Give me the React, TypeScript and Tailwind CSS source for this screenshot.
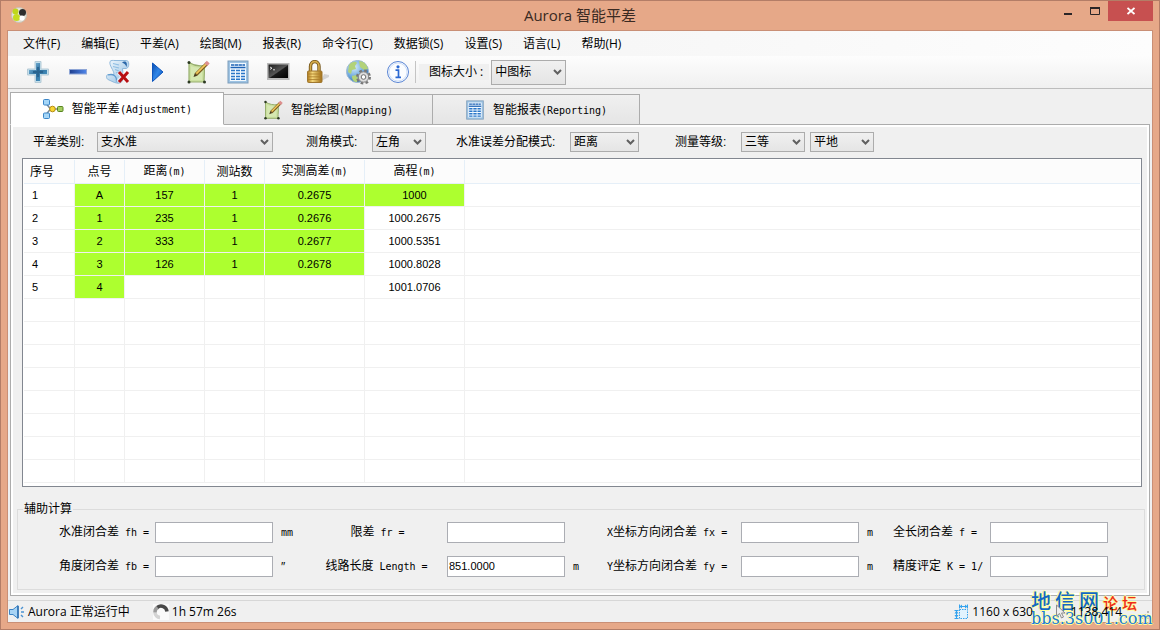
import { useState } from "react";
import type { ReactNode } from "react";

const MENUS = [
  "文件(F)",
  "编辑(E)",
  "平差(A)",
  "绘图(M)",
  "报表(R)",
  "命令行(C)",
  "数据锁(S)",
  "设置(S)",
  "语言(L)",
  "帮助(H)",
];

type Cell = { value: string; green?: boolean };

const g = (value: string): Cell => ({ value, green: true });
const w = (value: string): Cell => ({ value });

const ROWS: Cell[][] = [
  [g("A"), g("157"), g("1"), g("0.2675"), g("1000")],
  [g("1"), g("235"), g("1"), g("0.2676"), w("1000.2675")],
  [g("2"), g("333"), g("1"), g("0.2677"), w("1000.5351")],
  [g("3"), g("126"), g("1"), g("0.2678"), w("1000.8028")],
  [g("4"), w(""), w(""), w(""), w("1001.0706")],
];

const HEADERS = ["点号", "距离(m)", "测站数", "实测高差(m)", "高程(m)"];
const EMPTY_ROWS = 8;

// Latin runs are half as wide as the Chinese characters beside them
function Mixed({ text }: { text: string }) {
  const parts = text.split(/([\x20-\x7e]+)/).filter(Boolean);
  return (
    <>
      {parts.map((p, i) =>
        /^[\x20-\x7e]+$/.test(p) ? (
          <span
            key={i}
            className="font-['DejaVu_Sans_Mono','Liberation_Mono',monospace] text-[10px] whitespace-pre"
          >
            {p}
          </span>
        ) : (
          <span key={i}>{p}</span>
        ),
      )}
    </>
  );
}

/* ---------- icons ---------- */

function PlusIcon() {
  return (
    <svg width="24" height="24" viewBox="0 0 24 24">
      <defs>
        <linearGradient id="plus" x1="0" y1="0" x2="1" y2="1">
          <stop offset="0" stopColor="#8cc8e8" />
          <stop offset="0.5" stopColor="#2f6f9f" />
          <stop offset="1" stopColor="#4f9fcc" />
        </linearGradient>
      </defs>
      <path
        d="M9 1.500h6V9h7.500v6H15v7.500H9V15H1.500V9H9z"
        fill="#c3dfec"
        stroke="#b4cad6"
      />
      <path d="M10 3h4v7h7v4h-7v7h-4v-7H3v-4h7z" fill="url(#plus)" />
      <path d="M12 7v10M7 12h10" stroke="#2a648f" strokeWidth="1.800" />
    </svg>
  );
}

function MinusIcon() {
  return (
    <svg width="24" height="24" viewBox="0 0 24 24">
      <defs>
        <linearGradient id="minus" x1="0" y1="0" x2="1" y2="0">
          <stop offset="0" stopColor="#1f3f8f" />
          <stop offset="1" stopColor="#4f86ea" />
        </linearGradient>
      </defs>
      <rect x="3.500" y="9.500" width="17" height="4.500" fill="url(#minus)" stroke="#8fa6d6" />
    </svg>
  );
}

function ScrollDeleteIcon() {
  return (
    <svg width="26" height="26" viewBox="0 0 26 26">
      <defs>
        <linearGradient id="scroll" x1="0" y1="0" x2="1" y2="1">
          <stop offset="0" stopColor="#f4fafe" />
          <stop offset="1" stopColor="#8dbbe0" />
        </linearGradient>
      </defs>
      <path
        d="M5 2.500c1-1.500 3-1 5-1h11.500c3 0 3 7 0 8h-4c0 4 2 9-1 13.500-2 2-5 1-7 .500L3 20.500c-2-1-2-4.500 0-5h6C9 11 4 7 5 2.500z"
        fill="url(#scroll)"
        stroke="#8fb9dc"
      />
      <path d="M17 3.500c3-2.500 6-.500 4.500 4.500-1-3-2.500-3.500-4.500-4.500z" fill="#2b67a8" />
      <path d="M3 16c5-1.500 9 .500 8.500 6.500" fill="none" stroke="#5f9bd0" strokeWidth="1.300" />
      <path d="M8 4.500l6 1.500M8 7.500l6 1.500M10 10.500l4 1.500M11 13.500l3 1" stroke="#8ebde2" strokeWidth="1.200" />
      <path d="M13.500 13l9 9.500M22.500 12.500L13 23" stroke="#fff" strokeWidth="4.500" opacity="0.6" />
      <path d="M14 13l9 10M23 13l-9 10" stroke="#b80f12" strokeWidth="3" />
    </svg>
  );
}

function PlayIcon() {
  return (
    <svg width="24" height="24" viewBox="0 0 24 24">
      <defs>
        <linearGradient id="play" x1="0" y1="0" x2="1" y2="1">
          <stop offset="0" stopColor="#0a4cae" />
          <stop offset="0.5" stopColor="#2f86e8" />
          <stop offset="1" stopColor="#0a4cae" />
        </linearGradient>
      </defs>
      <path d="M6.500 3L17 12 6.500 21.500z" fill="url(#play)" stroke="#0d55bd" />
    </svg>
  );
}

function MapIcon({ size = 24 }: { size?: number }) {
  return (
    <svg width={size} height={size} viewBox="0 0 24 24">
      <path
        d="M3 2.500c4 2.500 10 4 15 3 1 5 0 10 0 16.500H3z"
        fill="#cbe0a0"
        stroke="#97ae6e"
        strokeWidth="1.200"
      />
      <path d="M5 6c3 1.500 7 2 11 1.500V20H5z" fill="#d6e8b2" />
      <circle cx="3" cy="2.500" r="1.500" fill="#2c3922" />
      <circle cx="3" cy="22" r="1.500" fill="#2c3922" />
      <circle cx="18.500" cy="22" r="1.500" fill="#2c3922" />
      <path d="M10 14.500L21 3.500" stroke="#7a5a1e" strokeWidth="3.600" />
      <path d="M10.300 13.700L20.700 3.300" stroke="#f2c95c" strokeWidth="1.800" />
      <path d="M19.800 4.700L22.300 2.200" stroke="#dd8f8f" strokeWidth="4" />
      <path d="M7.500 17l1.300-3.700 2.500 2.400z" fill="#4a3a1e" />
    </svg>
  );
}

function SheetIcon({ size = 24 }: { size?: number }) {
  return (
    <svg width={size} height={size} viewBox="0 0 24 24">
      <rect x="1.500" y="0.500" width="21" height="23" fill="#7c9dbb" />
      <rect x="2.500" y="1.500" width="19" height="21" fill="#9dc3e3" />
      <rect x="4" y="3" width="16" height="18" fill="#f2f9ff" />
      <path d="M5 5h14" stroke="#1c62b5" strokeWidth="1.500" strokeDasharray="3.300 0.500" />
      <path d="M4.500 7.500h15" stroke="#1c62b5" strokeWidth="1.500" />
      <path
        d="M5 10.500h14M5 13.500h14M5 16.500h14M5 19.300h14"
        stroke="#2a76c8"
        strokeWidth="1.600"
        strokeDasharray="4 1"
      />
    </svg>
  );
}

function ConsoleIcon() {
  return (
    <svg width="24" height="24" viewBox="0 0 24 24">
      <defs>
        <linearGradient id="console" x1="0" y1="0" x2="1" y2="1">
          <stop offset="0" stopColor="#1c1c1c" />
          <stop offset="0.5" stopColor="#555" />
          <stop offset="0.550" stopColor="#1a1a1a" />
          <stop offset="1" stopColor="#000" />
        </linearGradient>
      </defs>
      <rect x="1" y="3" width="22.500" height="17" fill="#b9b9b9" />
      <rect x="2.500" y="4.500" width="19.500" height="13.500" fill="url(#console)" />
      <path d="M4 7l2 1.200L4 9.400M7 9.800h2" fill="none" stroke="#eee" strokeWidth="0.900" />
    </svg>
  );
}

function LockIcon() {
  return (
    <svg width="24" height="24" viewBox="0 0 24 24">
      <defs>
        <linearGradient id="lock" x1="0" y1="0" x2="1" y2="0">
          <stop offset="0" stopColor="#b07a1c" />
          <stop offset="0.350" stopColor="#f4d77c" />
          <stop offset="1" stopColor="#a06c14" />
        </linearGradient>
      </defs>
      <path d="M15 21l8-4v-2l-5-1z" fill="#c4c4c4" opacity="0.700" />
      <path d="M4.500 12V6.500c0-6.500 8.500-6.500 8.500 0V12" fill="none" stroke="#77571a" strokeWidth="3.400" />
      <path d="M4.500 12V6.500c0-6.500 8.500-6.500 8.500 0V12" fill="none" stroke="#d6ac4c" strokeWidth="1.600" />
      <rect x="1.500" y="11" width="14.500" height="11.500" rx="1" fill="url(#lock)" stroke="#a07830" />
      <path d="M2 14h13.500M2 16.800h13.500M2 19.500h13.500" stroke="#a97c2a" strokeWidth="0.800" />
    </svg>
  );
}

function GlobeGearIcon() {
  return (
    <svg width="26" height="26" viewBox="0 0 26 26">
      <defs>
        <radialGradient id="globe" cx="0.350" cy="0.300" r="0.800">
          <stop offset="0" stopColor="#d6ecfb" />
          <stop offset="0.550" stopColor="#6fa9de" />
          <stop offset="1" stopColor="#2c66a8" />
        </radialGradient>
      </defs>
      <circle cx="12.500" cy="12.500" r="11" fill="url(#globe)" stroke="#9dbad4" />
      <path
        d="M4 6c3-4 7-4 8-2l-2 3 1 3-4 1-1 4-3-2zM14 2c5 0 8 4 9 8l-4 1-4-3zM7 17l4-1 2 3-1 4c-3 0-5-2-5-6z"
        fill="#b2d279"
      />
      <circle cx="18.500" cy="18" r="6" fill="none" stroke="#777" strokeWidth="3" strokeDasharray="2.500 2.200" />
      <circle cx="18.500" cy="18" r="5.200" fill="#dcdcdc" stroke="#858585" />
      <circle cx="18.500" cy="18" r="2.300" fill="#fff" stroke="#6d6d6d" />
    </svg>
  );
}

function InfoIcon() {
  return (
    <svg width="24" height="24" viewBox="0 0 24 24">
      <circle cx="12" cy="12" r="10.500" fill="#fbfdff" stroke="#5884d4" />
      <circle cx="12" cy="12" r="9" fill="none" stroke="#cfdff8" />
      <circle cx="12" cy="6.800" r="1.600" fill="#2b68d2" />
      <path d="M9.500 10.200h3v7M9.500 17.300h5.500" fill="none" stroke="#2b68d2" strokeWidth="1.700" />
    </svg>
  );
}

function NetworkIcon() {
  return (
    <svg width="22" height="22" viewBox="0 0 22 22">
      <path d="M4.500 6l4 5-4 5M10 11h8" fill="none" stroke="#7b8794" strokeWidth="1.500" />
      <rect x="1.500" y="1.500" width="6" height="5.500" rx="1" fill="#a6d6f7" stroke="#3b86c8" />
      <rect x="1.500" y="15" width="6" height="5.500" rx="1" fill="#a6d6f7" stroke="#3b86c8" />
      <circle cx="10.500" cy="11" r="2.800" fill="#f9d531" stroke="#b48b12" />
      <rect x="15.500" y="8.500" width="5.500" height="5" rx="1" fill="#a5cf62" stroke="#588420" />
    </svg>
  );
}

function AppIcon() {
  return (
    <svg width="16" height="16" viewBox="0 0 16 16">
      <circle cx="8" cy="8" r="7.500" fill="#e6e6dc" stroke="#c9c2b4" />
      <circle cx="4.500" cy="4.500" r="3" fill="#bfd71c" />
      <circle cx="5.500" cy="10.500" r="3.500" fill="#c6dd20" />
      <circle cx="11.500" cy="5.500" r="3.500" fill="#2e2e2e" />
      <circle cx="11" cy="11" r="2.500" fill="#fff" />
    </svg>
  );
}

function SpeakerIcon() {
  return (
    <svg width="16" height="16" viewBox="0 0 16 16">
      <path d="M.500 5.500h3.500l5-4v13l-5-4H.500z" fill="#a8d4f5" stroke="#3d85c6" />
      <path d="M9 2v12" stroke="#2b6cae" strokeWidth="1.500" />
      <path d="M12 5l2-2M12 8h3M12 11l2 2" stroke="#4a92d2" strokeWidth="1.400" />
    </svg>
  );
}

function SpinnerIcon() {
  return (
    <svg width="16" height="16" viewBox="0 0 16 16">
      <rect width="16" height="16" fill="#fafafa" />
      <path d="M7 13.500a5.500 5.500 0 0 1-5-5" fill="none" stroke="#d4d4d4" strokeWidth="3.500" />
      <path d="M2 8.500a5.500 5.500 0 0 1 3.500-5.500" fill="none" stroke="#9c9c9c" strokeWidth="3.500" />
      <path d="M4.500 3.300a6 6 0 0 1 9.500 4.200" fill="none" stroke="#484848" strokeWidth="3.500" />
    </svg>
  );
}

function SizeIcon() {
  return (
    <svg width="16" height="16" viewBox="0 0 16 16" fill="none" stroke="#35a3ee">
      <rect x="5.500" y="5.500" width="8" height="9" fill="#e2f3fe" strokeDasharray="1.500 1" />
      <path d="M5 2.500h9M5.500.500v4M13.500.500v4" />
      <path d="M8 .500v4l-2.500-2zM11 .500v4l2.500-2z" fill="#35a3ee" stroke="none" />
      <path d="M2.500 6v8M.500 6.500h4M.500 14.500h4" />
      <path d="M.500 11h4l-2 3zM.500 9.500h4l-2-3z" fill="#35a3ee" stroke="none" />
    </svg>
  );
}

/* ---------- controls ---------- */

type DropdownProps = {
  id: string;
  value: string;
  options?: string[];
  label?: string;
  className: string;
};

function Dropdown({ id, value, options = [], label, className }: DropdownProps) {
  return (
    <div className={`relative ${className}`}>
      <select
        id={id}
        aria-label={label}
        defaultValue={value}
        className="h-full w-full appearance-none border border-[#acacac] bg-linear-to-b from-[#f0f0f0] to-[#e5e5e5] pr-4 pl-[3px] leading-4"
      >
        {[value, ...options].map((o) => (
          <option key={o}>{o}</option>
        ))}
      </select>
      <svg
        width="9"
        height="8"
        viewBox="0 0 9 8"
        className="pointer-events-none absolute inset-y-0 right-1 my-auto"
      >
        <path d="M1 2l3.500 3.500L8 2" fill="none" stroke="#606060" strokeWidth="2" />
      </svg>
    </div>
  );
}

function ToolButton({ label, children }: { label: string; children: ReactNode }) {
  return (
    <button
      type="button"
      aria-label={label}
      className="flex h-8 w-10 items-center justify-center hover:bg-sky-100"
    >
      {children}
    </button>
  );
}

type FieldProps = { id: string; label: string; value?: string; unit?: string; align: string };

function Field({ id, label, value = "", unit, align }: FieldProps) {
  return (
    <>
      <label htmlFor={id} className={`whitespace-nowrap ${align}`}>
        <Mixed text={label} />
      </label>
      <input
        id={id}
        type="text"
        defaultValue={value}
        className="h-[21px] w-full border border-[#abadb3] bg-white px-px pb-[2px] font-['Liberation_Sans',sans-serif] text-[11px]"
      />
      {unit !== undefined && (
        <span className="pl-2">
          <Mixed text={unit} />
        </span>
      )}
    </>
  );
}

const TABS = [
  { text: "智能平差(Adjustment)", icon: <NetworkIcon />, width: "w-[214px]" },
  { text: "智能绘图(Mapping)", icon: <MapIcon size={20} />, width: "w-[209px]" },
  { text: "智能报表(Reporting)", icon: <SheetIcon size={20} />, width: "w-[207px]" },
];

export default function App() {
  const [tab, setTab] = useState(0);

  return (
    <div className="relative flex h-screen flex-col overflow-hidden border border-[#b37d67] bg-[#e6a888] px-[6px] pb-[6px] font-['Open_Sans','Noto_Sans_CJK_SC',sans-serif] text-[12px] leading-4 text-black">
      {/* Title bar */}
      <header className="relative flex h-[29px] shrink-0 items-start justify-between">
        <span className="pt-[6px] pl-1">
          <AppIcon />
        </span>
        <h1 className="absolute inset-x-0 top-1 text-center text-[15px] leading-5 text-[#3a2a22]">
          Aurora 智能平差
        </h1>
        <div className="relative flex">
          <button type="button" aria-label="最小化" className="flex h-5 w-7 items-center justify-center">
            <svg width="8" height="12" viewBox="0 0 8 12">
              <path d="M0 9h8" stroke="#2a2527" strokeWidth="2" />
            </svg>
          </button>
          <button type="button" aria-label="最大化" className="flex h-5 w-[26px] items-center justify-center">
            <svg width="10" height="8" viewBox="0 0 10 8">
              <path d="M.500 1v6.500h9V1" fill="none" stroke="#2a2527" />
              <path d="M0 1h10" stroke="#2a2527" strokeWidth="2" />
            </svg>
          </button>
          <button
            type="button"
            aria-label="关闭"
            className="flex h-5 w-[45px] items-center justify-center bg-[#c75050]"
          >
            <svg width="8" height="8" viewBox="0 0 8 8">
              <path d="M.500 1l7 6M7.500 1l-7 6" stroke="#fff" strokeWidth="1.800" />
            </svg>
          </button>
        </div>
      </header>

      <div className="flex min-h-0 flex-1 flex-col border border-[#c98f76] bg-[#f0f0f0]">
        {/* Menu */}
        <nav className="flex h-[25px] shrink-0 items-center gap-px bg-linear-to-r from-[#f0f0f0] to-[#fdfdfd] pl-[5px]">
          {MENUS.map((m) => (
            <button key={m} type="button" className="px-[10px] whitespace-nowrap">
              {m}
            </button>
          ))}
        </nav>

        {/* Toolbar */}
        <div className="flex h-[33px] shrink-0 items-center border-b border-[#bdbdbd] bg-linear-to-b from-[#fdfdfd] to-[#f0f0f0] pl-[10px]">
          <ToolButton label="添加"><PlusIcon /></ToolButton>
          <ToolButton label="移除"><MinusIcon /></ToolButton>
          <ToolButton label="清空"><ScrollDeleteIcon /></ToolButton>
          <ToolButton label="计算"><PlayIcon /></ToolButton>
          <ToolButton label="绘图"><MapIcon /></ToolButton>
          <ToolButton label="报表"><SheetIcon /></ToolButton>
          <ToolButton label="命令行"><ConsoleIcon /></ToolButton>
          <ToolButton label="数据锁"><LockIcon /></ToolButton>
          <ToolButton label="语言"><GlobeGearIcon /></ToolButton>
          <ToolButton label="帮助"><InfoIcon /></ToolButton>
          <div className="mr-[3px] -ml-[3px] h-[22px] w-px bg-[#c4c4c4]" />
          <label htmlFor="icon-size" className="mr-[2px] bg-[#f0f0f0] pr-[6px] pl-[10px] whitespace-pre">
            图标大小 :
          </label>
          <Dropdown id="icon-size" value="中图标" options={["小图标", "大图标"]} className="h-[25px] w-[75px]" />
        </div>

        {/* Tabs */}
        <main className="flex min-h-0 flex-1 flex-col px-[2px] pt-[3px] font-['Liberation_Sans','Noto_Sans_CJK_SC',sans-serif]">
          <div role="tablist" className="relative -mb-px flex items-end">
            {TABS.map((t, i) => (
              <button
                key={t.text}
                type="button"
                role="tab"
                aria-selected={tab === i}
                onClick={() => setTab(i)}
                className={`flex items-center justify-center gap-2 border border-[#acacac] ${t.width} ${
                  tab === i
                    ? "h-[33px] border-b-white bg-white"
                    : "h-[31px] border-l-0 bg-linear-to-b from-[#f0f0f0] to-[#e5e5e5]"
                }`}
              >
                {t.icon}
                <span className="pt-[2px]">
                  <Mixed text={t.text} />
                </span>
              </button>
            ))}
          </div>

          <div className="flex min-h-0 flex-1 flex-col border border-[#acacac] bg-[#f0f0f0] pt-[7px] pr-1 pb-[5px] pl-[6px] ring-2 ring-white ring-inset">
            {/* Options */}
            <div className="flex shrink-0 items-center pl-4 whitespace-nowrap">
              <label htmlFor="kind" className="w-16">平差类别:</label>
              <Dropdown id="kind" value="支水准" options={["闭合水准", "附合水准"]} className="h-5 w-44" />
              <label htmlFor="angle" className="ml-[33px] w-[66px]">测角模式:</label>
              <Dropdown id="angle" value="左角" options={["右角"]} className="h-5 w-[54px]" />
              <label htmlFor="mode" className="ml-[30px] w-[114px]">水准误差分配模式:</label>
              <Dropdown id="mode" value="距离" options={["测站数"]} className="h-5 w-[69px]" />
              <label htmlFor="grade" className="ml-9 w-[66px]">测量等级:</label>
              <Dropdown id="grade" value="三等" options={["二等", "四等"]} className="h-5 w-16" />
              <Dropdown id="ground" label="地形" value="平地" options={["山地"]} className="ml-[5px] h-5 w-16" />
            </div>

            {/* Data grid */}
            <div className="mt-[6px] mr-[3px] ml-[5px] min-h-0 flex-1 overflow-hidden border border-[#828790] bg-white p-px">
              <table className="w-full table-fixed border-separate border-spacing-0 text-center text-[11px]">
                <colgroup>
                  <col className="w-[51px]" />
                  <col className="w-[50px]" />
                  <col className="w-20" />
                  <col className="w-[60px]" />
                  <col className="w-[100px]" />
                  <col className="w-[100px]" />
                  <col />
                </colgroup>
                <thead>
                  <tr className="h-6 bg-[#fcfcfc] text-[12px] [&>th]:border-r [&>th]:border-b [&>th]:border-[#e5eff8] [&>th]:p-0 [&>th]:font-normal [&>th:last-child]:border-r-0">
                    <th className="text-left">
                      <span className="pl-[6px]">序号</span>
                    </th>
                    {HEADERS.map((h) => (
                      <th key={h}>
                        <Mixed text={h} />
                      </th>
                    ))}
                    <th />
                  </tr>
                </thead>
                <tbody>
                  {ROWS.map((row, r) => (
                    <tr key={r} className="h-[23px] [&>td]:border-r [&>td]:border-b [&>td]:border-[#f0f0f0] [&>td]:p-0 [&>td:last-child]:border-r-0">
                      <td className="text-left">
                        <span className="pl-2">{r + 1}</span>
                      </td>
                      {row.map((c, i) => (
                        <td key={i} className={c.green ? "bg-[#adff2f]" : ""}>
                          {c.value}
                        </td>
                      ))}
                      <td />
                    </tr>
                  ))}
                  {Array.from({ length: EMPTY_ROWS }, (_, r) => (
                    <tr key={r} className="h-[23px] [&>td]:border-r [&>td]:border-b [&>td]:border-[#f0f0f0] [&>td]:p-0 [&>td:last-child]:border-r-0">
                      {Array.from({ length: 7 }, (_, i) => (
                        <td key={i} />
                      ))}
                    </tr>
                  ))}
                </tbody>
              </table>
            </div>

            {/* Auxiliary results */}
            <fieldset className="mt-[14px] shrink-0 border border-[#dcdcdc] px-0 pb-3">
              <legend className="ml-[5px] px-px">辅助计算</legend>
              <div className="mt-[5px] grid grid-cols-[137px_118px_51px_123px_118px_42px_134px_118px_34px_97px_118px] items-center gap-y-[13px]">
                <Field id="fh" label="水准闭合差 fh =" unit="mm" align="pr-[6px] text-right" />
                <Field id="fr" label="限差 fr =" unit="" align="pr-4 text-center" />
                <Field id="fx" label="X坐标方向闭合差 fx =" unit="m" align="text-left" />
                <Field id="f" label="全长闭合差 f =" align="text-left" />
                <Field id="fb" label="角度闭合差 fb =" unit="″" align="pr-[6px] text-right" />
                <Field id="length" label="线路长度 Length =" value="851.0000" unit="m" align="pr-[18px] text-center" />
                <Field id="fy" label="Y坐标方向闭合差 fy =" unit="m" align="text-left" />
                <Field id="k" label="精度评定 K = 1/" align="text-left" />
              </div>
            </fieldset>
          </div>
        </main>

        {/* Status bar */}
        <footer className="mt-1 flex h-[22px] shrink-0 items-center border-t border-[#d7d7d7] pr-[30px] pl-px whitespace-nowrap">
          <SpeakerIcon />
          <span className="ml-[3px]">Aurora 正常运行中</span>
          <span className="mr-[3px] ml-[23px]">
            <SpinnerIcon />
          </span>
          <span>1h 57m 26s</span>
          <span className="mr-[2px] ml-auto">
            <SizeIcon />
          </span>
          <span className="relative z-10">1160 x 630</span>
          <svg width="12" height="16" viewBox="0 0 12 16" className="relative z-10 mr-1 ml-[22px]">
            <path d="M1.500 1v11l3-2.500L6.500 14l2-1-2-4H10z" fill="#eee" stroke="#8c8c8c" />
          </svg>
          <span className="relative z-10">1138,414</span>
        </footer>
      </div>

      <svg width="8" height="8" viewBox="0 0 8 8" className="absolute right-[10px] bottom-[10px]">
        <path d="M6 0h2v2H6zM3 3h2v2H3zM6 3h2v2H6zM0 6h2v2H0zM3 6h2v2H3zM6 6h2v2H6z" fill="#b4b4b4" />
      </svg>

      {/* Forum stamp */}
      <div className="pointer-events-none absolute right-[6px] bottom-[2px] w-[122px] whitespace-nowrap [text-shadow:1px_0_#ffff9c,-1px_0_#ffff9c,0_1px_#ffff9c,0_-1px_#ffff9c]">
        <div className="flex items-center gap-1 font-['Noto_Sans_CJK_SC',sans-serif] leading-4">
          <span className="flex gap-1 text-[20px] font-medium text-[#1268c4]">
            <span>地</span>
            <span>信</span>
            <span>网</span>
          </span>
          <span className="flex gap-1 pt-1 text-[15px] font-medium text-[#ee2a1c]">
            <span>论</span>
            <span>坛</span>
          </span>
        </div>
        <div className="font-['DejaVu_Serif',serif] text-[16px] leading-4 text-[#1878e0]">bbs.3s001.com</div>
      </div>
    </div>
  );
}
